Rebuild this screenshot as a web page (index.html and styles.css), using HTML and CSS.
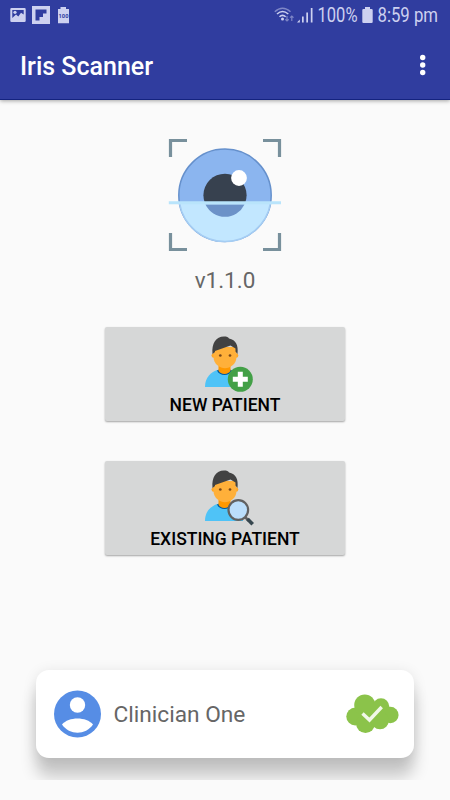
FILE: index.html
```html
<!DOCTYPE html>
<html lang="en">
<head>
<meta charset="utf-8">
<title>Iris Scanner</title>
<link rel="stylesheet" href="styles.css">
</head>
<body>
<svg class="defs" aria-hidden="true">
  <symbol id="person" viewBox="0 0 50 58">
    <path fill="#4fc3f7" d="M1 52C1 42 7 37.500 13 35H27C34 38 39 43 39 52Z"/>
    <path fill="#01579b" d="M13 35.500C15 41 25 42 28 35.500L25 34H16Z"/>
    <path fill="#ff9800" d="M14.500 29H26.500V35.500C25 40 16 40 14.500 35.500Z"/>
    <circle fill="#ffa726" cx="9.800" cy="20.500" r="2.300"/><circle fill="#ffa726" cx="32" cy="20.500" r="2.300"/>
    <path fill="#ffb03a" d="M9.500 12H32.500V22C32.500 29 26 33.300 21 33.300S9.500 29 9.500 22Z"/>
    <path fill="#424242" d="M8.500 19C7.500 8 12 1.500 20 1.500C23 1.500 24 2 25 3.500C32 5 34.500 10 33.500 19L31.500 16.500V13.500L26.500 10.500L11 16V17Z"/>
    <circle fill="#784719" cx="16.300" cy="20.500" r="1.350"/><circle fill="#784719" cx="26" cy="20.500" r="1.350"/>
  </symbol>
</svg>
<header class="top">
  <div class="status">
    <svg class="notices" width="80" height="32" viewBox="0 0 80 32">
      <path fill="#cdd1f0" fill-rule="evenodd" d="M11.500 8H24.500Q25.700 8 25.700 9.200V20.800Q25.700 22 24.500 22H11.500Q10.300 22 10.300 20.800V9.200Q10.300 8 11.500 8ZM12.300 10V18L16 14.500L18.300 16.500L21 12.700L23.700 14.500V10Z"/>
      <circle fill="#cdd1f0" cx="15" cy="12.300" r="1.600"/>
      <path fill="#cdd1f0" fill-rule="evenodd" d="M32 6H50V24H32ZM35.500 9.500V20.500H39.500V17H43V13.500H46.500V9.500Z"/>
      <path fill="#cdd1f0" d="M60.500 7H66V9H69V23.300H58V9H60.500Z"/>
      <text class="tiny" x="58.600" y="18" textLength="9.800" lengthAdjust="spacingAndGlyphs">100</text>
    </svg>
    <svg class="signals" width="185" height="32" viewBox="265 0 185 32">
      <g fill="none" stroke="#cdd1f0" stroke-width="1.500">
        <path opacity=".5" d="M274.800 11.800Q282.500 4.800 290.500 11.800"/>
        <path d="M277 14Q282.500 9 288.300 14M279.500 16.800Q282.500 14 285.700 16.800"/>
      </g>
      <circle fill="#cdd1f0" cx="282.500" cy="19" r="1.500"/>
      <path opacity=".5" fill="none" stroke="#cdd1f0" stroke-width="1.200" d="M287 16V21M285.300 19.300L287 21L288.700 19.300M291.800 21V16M290.100 17.700L291.800 16L293.500 17.700"/>
      <path fill="#cdd1f0" d="M297 22.500L299.800 19.500V22.500ZM302 16.500H303.700V22.500H302ZM306.300 12.500H308V22.500H306.300ZM310.800 8H312.500V22.500H310.800Z"/>
      <text class="condensed" x="317.500" y="22.200" textLength="40" lengthAdjust="spacingAndGlyphs">100%</text>
      <path fill="#cdd1f0" d="M365 7H370V9H371.500Q372.700 9 372.700 10V22Q372.700 23 371.500 23H363.500Q362.300 23 362.300 22V10Q362.300 9 363.500 9H365Z"/>
      <text class="condensed" x="377.500" y="22.200" textLength="60.500" lengthAdjust="spacingAndGlyphs">8:59 pm</text>
    </svg>
  </div>
  <div class="appbar">
    <h1>Iris Scanner</h1>
    <svg width="8" height="24" viewBox="0 0 8 24" fill="#fff"><circle cx="3.700" cy="4.500" r="2.700"/><circle cx="3.700" cy="12" r="2.700"/><circle cx="3.700" cy="19.500" r="2.700"/></svg>
  </div>
</header>
<main>
  <svg class="logo" width="116" height="116" viewBox="0 0 116 116">
    <path fill="none" stroke="#78909c" stroke-width="3.200" d="M3.500 20V3.500H20M96 3.500H112.500V20M3.500 96V112.500H20M96 112.500H112.500V96"/>
    <circle cx="58" cy="58.300" r="46.200" fill="#8bb5ef" stroke="#6590cc" stroke-width="1.500"/>
    <circle cx="58" cy="58.300" r="21.600" fill="#37414f"/>
    <circle cx="72" cy="41" r="7.900" fill="#fff"/>
    <path fill="#c2e7ff" stroke="#a5cdf3" stroke-width="1.500" d="M12.450 66A46.200 46.200 0 0 0 103.550 66Z"/>
    <path fill="#6c92c8" d="M38.500 67.500A21.600 21.600 0 0 0 77.500 67.500Z"/>
    <path stroke="#b9e4fb" stroke-width="3" d="M1.800 65.800H114"/>
  </svg>
  <p class="version">v1.1.0</p>
  <button class="action">
    <svg width="50" height="58" viewBox="0 0 50 58"><use href="#person"/><circle fill="#43a047" cx="36.300" cy="44.300" r="12.500"/><path fill="#fff" d="M33.800 36.800H38.800V41.800H43.800V46.800H38.800V51.800H33.800V46.800H28.800V41.800H33.800Z"/></svg>
    <span>NEW PATIENT</span>
  </button>
  <button class="action">
    <svg width="50" height="58" viewBox="0 0 50 58"><use href="#person"/><path stroke="#616161" stroke-width="2.500" d="M41 48L45 52"/><path stroke="#37474f" stroke-width="3.700" d="M43.500 50L48.700 55.200"/><circle fill="#bbdefb" stroke="#616161" stroke-width="2.200" cx="34.300" cy="41" r="9.800"/></svg>
    <span>EXISTING PATIENT</span>
  </button>
</main>
<footer>
  <section class="card">
    <svg width="48" height="48" viewBox="0 0 48 48"><circle cx="24.500" cy="24" r="23.500" fill="#568de5"/><circle cx="24.500" cy="15" r="7.700" fill="#fff"/><path fill="#fff" d="M9 34.500C15.500 26.500 33.500 26.500 40 34.500C32.500 45.500 16.500 45.500 9 34.500Z"/></svg>
    <span class="name">Clinician One</span>
    <svg class="cloud" width="54" height="42" viewBox="0 0 54 42"><g fill="#8bc34a"><circle cx="10.300" cy="23.500" r="9"/><circle cx="19.800" cy="12" r="10.600"/><circle cx="36" cy="13.500" r="8.300"/><circle cx="45.300" cy="22" r="8.300"/><circle cx="20.500" cy="30.500" r="9.500"/><circle cx="35" cy="27.500" r="8.800"/><path d="M14 12H40V29H14Z"/></g><path fill="none" stroke="#f1f8e9" stroke-width="3.400" d="M17.500 20.500L24.500 27L36.700 14"/></svg>
  </section>
</footer>
</body>
</html>
```
FILE: styles.css
```css
* { box-sizing: border-box; }
body {
  margin: 0;
  height: 800px;
  display: flex;
  flex-direction: column;
  overflow: hidden;
  background: #fafafa;
  font-family: Roboto, "Liberation Sans", sans-serif;
}
svg { display: block; flex: none; }
.defs { position: absolute; width: 0; height: 0; }
.top {
  height: 100px;
  background: #303d9f;
  border-bottom: 1px solid #14237f;
  box-shadow: 0 1px 4px rgba(0, 0, 0, .35);
}
.status { display: flex; justify-content: space-between; height: 32px; }
.condensed { font-size: 19.5px; fill: #cdd1f0; }
.tiny { font-size: 6px; font-weight: 700; fill: #303d9f; }
.appbar {
  display: flex;
  align-items: center;
  justify-content: space-between;
  height: 68px;
  padding: 0 23px 2px 20px;
}
h1 { margin: 4px 0 0; font-size: 25px; font-weight: 500; line-height: 30px; color: #fff; }
main { display: flex; flex-direction: column; align-items: center; padding-top: 37px; }
.version { margin: 13px 0 0; font-size: 22.5px; line-height: 28px; height: 28px; color: #666; }
.action {
  display: flex;
  flex-direction: column;
  align-items: center;
  width: 240px;
  height: 94px;
  margin: 33px 0 0;
  padding: 8px 0 0;
  border: 0;
  border-radius: 2px;
  background: #d6d7d7;
  box-shadow: 0 1px 2px rgba(0, 0, 0, .35);
  font: 500 17.5px/24px Roboto, sans-serif;
  color: #000;
}
.action svg { margin-left: 8px; }
.action + .action { margin-top: 40px; }
footer { margin-top: auto; margin-bottom: 25px; margin-bottom: 20px; height: 130px; padding: 20px 36px 0; overflow: hidden; }
.card {
  display: flex;
  align-items: center;
  height: 88px;
  padding: 0 15px 0 17px;
  border-radius: 13px;
  background: #fff;
  box-shadow: 0 19px 16px rgba(0, 0, 0, .2), 0 2px 14px rgba(0, 0, 0, .1);
}
.name { margin-left: 12.5px; font-size: 22.7px; color: #666; white-space: nowrap; }
.cloud { margin-left: auto; }
```
